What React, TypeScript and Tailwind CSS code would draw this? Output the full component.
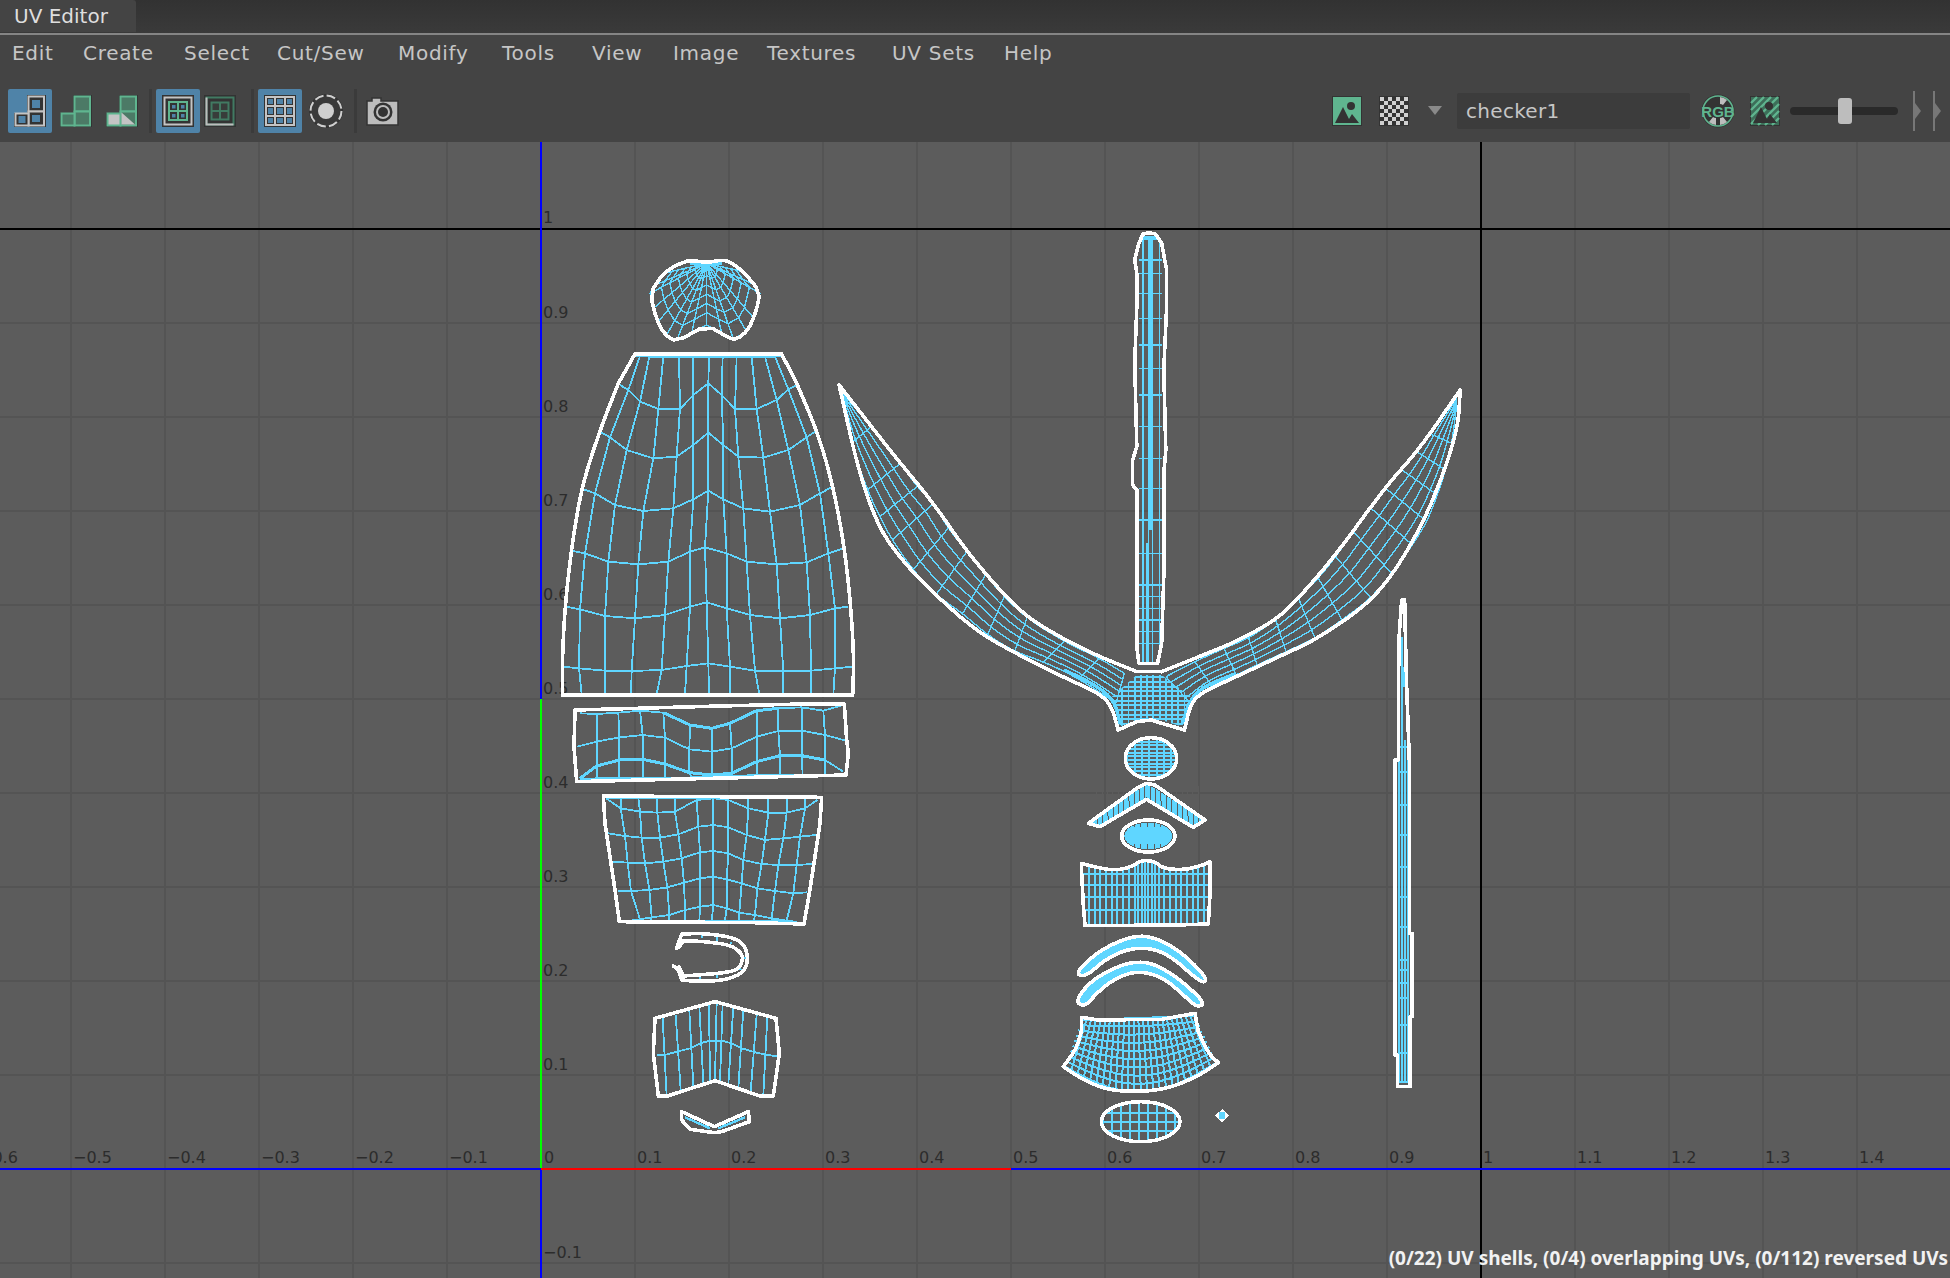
type P = [number, number];

const CYAN = '#5fd6ff';
const pts = (a: P[]) => a.map((p) => p.join(',')).join(' ');
const range = (a: number, b: number, d: number) => {
  const out: number[] = [];
  for (let v = a; v <= b; v += d) out.push(v);
  return out;
};
const lerp = (a: P, b: P, t: number): P => [a[0] + (b[0] - a[0]) * t, a[1] + (b[1] - a[1]) * t];

// corner cutting, two passes, so the hand-picked points read as curves
const smooth = (p: P[], closed = false, passes = 2): P[] => {
  let cur = p;
  for (let k = 0; k < passes; k++) {
    const next: P[] = closed ? [] : [cur[0]];
    const n = cur.length;
    for (let i = 0; i < (closed ? n : n - 1); i++) {
      const a = cur[i];
      const b = cur[(i + 1) % n];
      next.push(lerp(a, b, 0.25), lerp(a, b, 0.75));
    }
    if (!closed) next.push(cur[n - 1]);
    cur = next;
  }
  return cur;
};

// zoomed-in coordinates -> page coordinates
function Z({ ox, oy, sx = 3, sy = 3, children }: { ox: number; oy: number; sx?: number; sy?: number; children: React.ReactNode }) {
  return <g transform={`translate(${ox} ${oy}) scale(${1 / sx} ${1 / sy})`}>{children}</g>;
}

function Line({ p, w = 1.8, c = CYAN }: { p: P[]; w?: number; c?: string }) {
  return <polyline points={pts(p)} fill="none" stroke={c} strokeWidth={w} vectorEffect="non-scaling-stroke" />;
}

function Outline({ p, open }: { p: P[]; open?: boolean }) {
  const Tag = open ? 'polyline' : 'polygon';
  return <Tag points={pts(p)} fill="none" stroke="#ffffff" strokeWidth={3.6} strokeLinejoin="round" strokeLinecap="round" vectorEffect="non-scaling-stroke" />;
}

function Ring({ cx, cy, rx, ry }: { cx: number; cy: number; rx: number; ry: number }) {
  return <ellipse cx={cx} cy={cy} rx={rx} ry={ry} fill="none" stroke="#fff" strokeWidth={3.6} vectorEffect="non-scaling-stroke" />;
}

function Mesh({ rows, w }: { rows: P[][]; w?: number }) {
  const n = rows[0].length;
  return (
    <>
      {rows.map((r, i) => <Line key={i} p={r} w={w} />)}
      {range(1, n - 2, 1).map((c) => <Line key={c} p={rows.map((r) => r[c])} w={w} />)}
    </>
  );
}

function Wing({ up, lo }: { up: P[]; lo: P[] }) {
  const fr = [0, 0.2, 0.4, 0.6, 0.8, 1];
  const cross = up.map((u, i) => fr.map((f) => lerp(u, lo[i], f)));
  return (
    <>
      {cross.map((r, i) => <Line key={i} p={r} w={1.4} />)}
      {fr.map((_, j) => <Line key={j} p={smooth(cross.map((r) => r[j]))} w={1.4} />)}
    </>
  );
}

// dense wire grid cut to the shape of the shell
function GridFill({ id, clip, xs, ys, w = 1.8 }: { id: string; clip: React.ReactNode; xs: number[]; ys: number[]; w?: number }) {
  return (
    <>
      <clipPath id={id}>{clip}</clipPath>
      <g clipPath={`url(#${id})`}>
        {xs.map((x) => <Line key={x} p={[[x, -2000], [x, 3000]]} w={w} />)}
        {ys.map((y) => <Line key={y} p={[[-2000, y], [3000, y]]} w={w} />)}
      </g>
    </>
  );
}

const capEdge: P[] = [[400, 130], [375, 165], [360, 190], [370, 235], [385, 275], [410, 315], [440, 332], [485, 310], [530, 285], [575, 310], [610, 326], [650, 305], [672, 265], [690, 190], [665, 160], [640, 125]];
const capRows: P[][] = [0.2, 0.35, 0.5, 0.65, 0.8, 1].map((f) => capEdge.map((e) => lerp([530, 100], e, f)));

const skirtRows: P[][] = range(0, 9, 1).map((r) => {
  const f = r / 9;
  const l = lerp([125, 900], [75, 1040], f);
  const rt = lerp([465, 888], [530, 1028], f);
  return range(0, 24, 1).map((i) => {
    const t = i / 24;
    const q = lerp(l, rt, t);
    return [q[0], q[1] + Math.sin(Math.PI * t) * 82 * f] as P;
  });
});

const bodyRows: P[][] = [
  [[315, 378], [330, 378], [358, 380], [400, 380], [447, 380], [490, 380], [537, 380], [578, 380], [620, 380], [665, 380], [705, 380], [735, 380], [755, 378]],
  [[270, 465], [295, 480], [330, 515], [385, 537], [450, 537], [490, 495], [535, 460], [575, 495], [615, 537], [680, 537], [740, 510], [775, 478], [800, 465]],
  [[210, 605], [240, 622], [290, 660], [370, 685], [440, 680], [490, 645], [535, 608], [580, 645], [625, 680], [700, 683], [775, 660], [830, 622], [855, 605]],
  [[160, 778], [195, 790], [255, 825], [340, 843], [430, 835], [490, 808], [535, 782], [580, 808], [640, 835], [720, 845], [810, 825], [870, 790], [905, 772]],
  [[125, 962], [165, 970], [235, 995], [325, 1003], [415, 995], [480, 965], [525, 952], [590, 970], [650, 995], [740, 1003], [830, 997], [895, 970], [940, 955]],
  [[110, 1130], [150, 1138], [225, 1158], [315, 1165], [405, 1155], [480, 1130], [530, 1117], [590, 1135], [660, 1155], [750, 1165], [840, 1155], [915, 1135], [955, 1130]],
  [[100, 1310], [147, 1315], [225, 1322], [305, 1323], [395, 1320], [470, 1308], [535, 1300], [600, 1310], [675, 1322], [760, 1323], [843, 1322], [915, 1315], [968, 1310]],
  [[100, 1392], [155, 1392], [225, 1392], [303, 1392], [380, 1392], [465, 1392], [537, 1392], [600, 1392], [688, 1392], [760, 1392], [843, 1392], [910, 1392], [968, 1392]],
];

const bandRows: P[][] = [
  [[150, 70], [200, 72], [265, 68], [330, 62], [400, 68], [480, 105], [545, 115], [600, 100], [680, 62], [745, 55], [815, 52], [880, 62], [940, 45]],
  [[140, 170], [200, 155], [268, 142], [338, 135], [405, 143], [478, 178], [545, 185], [605, 175], [680, 140], [745, 123], [815, 122], [885, 135], [948, 152]],
  [[150, 265], [200, 228], [268, 210], [338, 208], [405, 222], [478, 248], [545, 255], [605, 250], [680, 215], [750, 197], [815, 197], [885, 210], [940, 245]],
  [[150, 268], [200, 265], [268, 265], [340, 265], [405, 265], [485, 262], [545, 260], [610, 258], [680, 255], [750, 255], [818, 255], [885, 255], [940, 255]],
];

const trapRows: P[][] = [
  [[228, 325], [272, 325], [325, 325], [380, 325], [435, 325], [500, 325], [550, 325], [595, 325], [655, 325], [715, 325], [770, 325], [825, 325], [862, 325]],
  [[228, 325], [272, 355], [330, 365], [382, 368], [435, 365], [500, 330], [550, 325], [595, 330], [655, 355], [715, 368], [770, 368], [825, 355], [862, 330]],
  [[235, 430], [285, 438], [335, 443], [390, 443], [445, 433], [505, 410], [550, 405], [595, 412], [650, 435], [705, 450], [760, 445], [810, 440], [858, 435]],
  [[248, 515], [293, 518], [345, 520], [400, 515], [455, 505], [510, 487], [550, 483], [595, 490], [640, 510], [695, 522], [745, 525], [800, 525], [845, 522]],
  [[265, 603], [303, 603], [358, 600], [412, 592], [462, 578], [510, 565], [550, 560], [590, 568], [635, 580], [682, 595], [735, 603], [790, 610], [832, 607]],
  [[300, 692], [330, 688], [365, 682], [418, 675], [465, 660], [510, 650], [550, 645], [590, 655], [628, 668], [675, 675], [725, 685], [770, 692], [800, 696]],
  [[300, 692], [315, 692], [362, 692], [418, 692], [465, 692], [508, 692], [545, 692], [585, 692], [628, 692], [672, 692], [730, 692], [778, 692], [800, 696]],
];

const arcTop: P[] = [[105, 758], [180, 690], [270, 650], [330, 648], [400, 680], [460, 730], [500, 775], [490, 790], [450, 760], [400, 715], [340, 685], [270, 685], [200, 715], [135, 772]];
const arcLow: P[] = [[105, 845], [150, 785], [220, 745], [280, 725], [340, 730], [400, 765], [450, 805], [495, 850], [470, 862], [430, 825], [385, 785], [335, 760], [275, 755], [210, 785], [165, 825], [135, 860]];

function Shells() {
  return (
    <g shapeRendering="crispEdges">
      {/* left column */}
      <Z ox={530} oy={230}>
        {capRows.map((r, i) => <Line key={i} p={r} w={1.4} />)}
        {capEdge.map((_, c) => <Line key={c} w={1.4} p={[[530, 100], ...capRows.map((r) => r[c])]} />)}
        <Line w={3} p={[[480, 100], [575, 100]]} />
        <Outline p={smooth([[480, 90], [530, 98], [575, 90], [600, 95], [640, 125], [690, 185], [680, 240], [655, 300], [620, 328], [600, 325], [530, 285], [440, 335], [405, 315], [380, 270], [360, 190], [400, 130], [440, 105]], true, 1)} />
        <Mesh rows={bodyRows} />
        <Outline open p={[[265, 460], [315, 372], [755, 372], [800, 460]]} />
        <Outline open p={smooth([[800, 460], [860, 600], [905, 750], [940, 930], [960, 1100], [972, 1280], [968, 1395]])} />
        <Outline open p={[[968, 1395], [97, 1395]]} />
        <Outline open p={smooth([[97, 1395], [97, 1280], [105, 1130], [125, 950], [155, 770], [210, 600], [265, 460]])} />
      </Z>
      <Z ox={530} oy={690}>
        <Mesh rows={bandRows} />
        <Line w={3} p={[[400, 68], [480, 105], [545, 115], [600, 100], [680, 62], [745, 55]]} />
        <Line w={3} p={[[150, 265], [200, 228], [268, 210], [338, 208], [405, 222], [478, 248], [545, 255], [605, 250], [680, 215], [750, 197], [815, 197], [885, 210]]} />
        <Outline p={[[135, 60], [320, 55], [570, 48], [820, 42], [943, 42], [950, 150], [955, 190], [948, 255], [670, 262], [420, 268], [140, 275], [132, 170]]} />
        <Mesh rows={trapRows} />
        <Outline p={[[220, 318], [875, 322], [870, 400], [855, 500], [838, 610], [822, 702], [670, 698], [268, 695], [255, 600], [240, 500], [225, 400]]} />
        <Line p={[[515, 735], [515, 745]]} />
        <Line p={[[560, 742], [562, 752]]} />
        <Line p={[[605, 755], [600, 765]]} />
        <Line p={[[640, 805], [655, 805]]} />
        <Line p={[[625, 835], [635, 840]]} />
        <Line p={[[560, 855], [560, 865]]} />
        <Line p={[[510, 858], [510, 870]]} />
        <Outline open p={[[440, 775], ...smooth([[455, 732], [520, 730], [600, 740], [640, 760], [655, 800], [645, 845], [590, 870], [510, 875], [455, 870]]), [445, 840], [430, 828]]} />
        <Outline open p={[[447, 772], ...smooth([[460, 752], [530, 755], [600, 765], [630, 785], [640, 805], [625, 840], [570, 850], [500, 855], [460, 858]]), [447, 830]]} />
        {[[398, 985, 410, 1218], [437, 975, 452, 1200], [478, 960, 490, 1188], [508, 950, 520, 1178], [537, 940, 540, 1172], [560, 940, 555, 1170], [578, 942, 570, 1175], [610, 952, 595, 1185], [640, 960, 625, 1195], [680, 975, 662, 1205], [712, 983, 700, 1215]].map(([a, b, c, d]) => (
          <Line key={a} p={[[a, b], [c, d]]} />
        ))}
        <Line p={[[380, 1095], [405, 1095], [440, 1085], [480, 1075], [510, 1060], [540, 1052], [575, 1052], [605, 1060], [635, 1075], [680, 1088], [715, 1095], [745, 1100]]} />
        <Outline p={[[375, 985], [555, 935], [738, 985], [748, 1090], [730, 1218], [690, 1218], [555, 1172], [412, 1218], [385, 1218], [370, 1090]]} />
        <Line w={2.4} p={[[465, 1282], [540, 1315]]} />
        <Line w={2.4} p={[[565, 1315], [645, 1282]]} />
        <Outline p={[[455, 1265], [553, 1310], [655, 1265], [658, 1295], [575, 1325], [553, 1328], [480, 1318], [455, 1290]]} />
      </Z>

      {/* wings and stalk */}
      <Z ox={830} oy={230} sx={2.412}>
        <Wing
          up={[[30, 490], [100, 590], [170, 700], [210, 770], [250, 820], [285, 895], [330, 965], [375, 1035], [420, 1100], [475, 1165], [565, 1235], [650, 1285], [710, 1330]]}
          lo={[[30, 500], [50, 640], [90, 780], [120, 860], [150, 930], [200, 1020], [255, 1095], [320, 1150], [380, 1215], [445, 1265], [515, 1295], [600, 1345], [690, 1420]]}
        />
        <Wing
          up={[[1510, 500], [1445, 610], [1415, 665], [1380, 720], [1340, 775], [1305, 835], [1262, 905], [1220, 980], [1178, 1045], [1130, 1105], [1075, 1170], [1010, 1225], [950, 1255], [880, 1295], [810, 1340]]}
          lo={[[1510, 540], [1500, 640], [1485, 720], [1465, 795], [1440, 875], [1405, 945], [1355, 1030], [1305, 1105], [1235, 1170], [1170, 1225], [1100, 1265], [1030, 1305], [980, 1335], [920, 1365], [870, 1420]]}
        />
        <GridFill
          id="hub"
          clip={<polygon points="740,1335 800,1335 870,1400 850,1490 800,1470 740,1470 700,1490 680,1400" />}
          xs={range(705, 860, 15)}
          ys={range(1342, 1490, 14)}
        />
        <Line w={3.5} p={smooth([[565, 1320], [640, 1365], [685, 1410], [700, 1480]])} />
        <Line w={3.5} p={smooth([[980, 1330], [900, 1370], [868, 1410], [850, 1480]])} />
        <Outline open p={smooth([[22, 465], [100, 590], [170, 700], [250, 820], [330, 965], [420, 1095], [480, 1165], [560, 1225], [650, 1280], [740, 1325]])} />
        <Outline open p={[[740, 1325], [800, 1325]]} />
        <Outline open p={smooth([[800, 1325], [890, 1280], [980, 1235], [1075, 1170], [1130, 1105], [1220, 975], [1340, 770], [1420, 660], [1520, 480]])} />
        <Outline open p={smooth([[1520, 480], [1515, 590], [1480, 730], [1430, 880], [1360, 1030], [1290, 1130], [1170, 1230], [1100, 1270], [980, 1340], [900, 1385], [870, 1420], [855, 1500]])} />
        <Outline open p={[[855, 1500], [800, 1480], [775, 1470], [740, 1475], [695, 1500]]} />
        <Outline open p={smooth([[695, 1500], [680, 1430], [650, 1390], [560, 1340], [440, 1265], [350, 1200], [250, 1090], [180, 1000], [120, 900], [70, 730], [22, 465]])} />
        {[755, 768, 778, 795].map((x) => <Line key={x} w={1.4} p={[[x, 30], [x, 1295]]} />)}
        <Line w={3} p={[[772, 30], [772, 900]]} />
        <Line w={3} p={[[765, 940], [765, 1295]]} />
        <Line w={4} p={[[755, 25], [790, 25]]} />
        {[90, 130, 190, 265, 345, 415, 495, 590, 685, 775, 870, 970, 1065, 1100, 1135, 1170, 1205, 1240].map((y) => (
          <Line key={y} w={1.4} p={[[745, y], [800, y]]} />
        ))}
        <Outline p={[[770, 8], [785, 12], [800, 40], [812, 120], [812, 230], [805, 420], [810, 660], [805, 730], [805, 1040], [800, 1240], [790, 1300], [745, 1300], [740, 1250], [740, 780], [730, 765], [730, 690], [740, 650], [735, 400], [740, 230], [740, 130], [735, 90], [745, 40], [755, 12]]} />
      </Z>

      {/* small shells under the wings */}
      <Z ox={1040} oy={720}>
        <GridFill id="e1" clip={<ellipse cx={333} cy={115} rx={77} ry={62} />} xs={range(262, 410, 22)} ys={range(65, 170, 11)} w={2} />
        <Ring cx={333} cy={115} rx={77} ry={62} />

        <polygon points="320,195 345,205 490,300 460,318 320,232 180,316 150,310 290,212" fill={CYAN} />
        {range(170, 480, 16).map((x) => (
          <Line key={x} c="#5c5c5c" w={1} p={[[x, 196], [x + 3, 330]]} />
        ))}
        <Outline p={[[320, 190], [345, 195], [495, 300], [460, 322], [320, 238], [180, 320], [145, 310], [290, 205]]} />

        <ellipse cx={325} cy={348} rx={72} ry={40} fill={CYAN} />
        {range(262, 390, 20).map((x) => <Line key={x} c="#5c5c5c" w={1} p={[[x, 300], [x, 322]]} />)}
        {range(262, 390, 20).map((x) => <Line key={x} c="#5c5c5c" w={1} p={[[x, 372], [x, 395]]} />)}
        <Ring cx={325} cy={348} rx={80} ry={48} />

        <GridFill
          id="blk"
          clip={<polygon points="125,430 160,440 225,452 275,440 305,420 345,425 370,445 430,450 490,435 510,425 510,520 505,612 410,615 135,617 130,555 125,460" />}
          xs={[...range(147, 280, 17), ...range(285, 350, 10), ...range(356, 505, 17)]}
          ys={[462, 495, 530, 570]}
          w={2}
        />
        <Outline p={smooth([[125, 430], [160, 440], [225, 452], [275, 440], [305, 420], [345, 425], [370, 445], [430, 450], [490, 435], [510, 425]], false, 1).concat([[510, 520], [505, 612], [410, 615], [135, 617], [130, 555], [125, 460]])} />

        <polygon fill={CYAN} points={pts(smooth(arcTop, true))} />
        <Outline p={smooth(arcTop, true)} />
        <polygon fill={CYAN} points={pts(smooth(arcLow, true))} />
        <Outline p={smooth(arcLow, true)} />

        <Mesh rows={skirtRows} w={2} />
        <Outline p={[[125, 892], [175, 900], [365, 898], [465, 880], ...smooth([[475, 935], [505, 1000], [535, 1028]]), ...smooth([[535, 1028], [480, 1065], [400, 1100], [320, 1115], [210, 1112], [130, 1080], [70, 1040]]), ...smooth([[70, 1040], [110, 985], [125, 930]])]} />

        <GridFill id="e3" clip={<ellipse cx={302} cy={1205} rx={118} ry={60} />} xs={range(190, 420, 27)} ys={[1178, 1205, 1232]} w={2} />
        <Ring cx={302} cy={1205} rx={118} ry={60} />

        <polygon points="547,1167 568,1187 547,1208 525,1187" fill="#fff" />
        <rect x={538} y={1177} width={18} height={20} fill={CYAN} />

        {/* thin strip on the right */}
        <Line w={2.6} p={[[1086, -250], [1086, 1090]]} />
        {[1078, 1094, 1104].map((x) => <Line key={x} p={[[x, 60], [x, 1090]]} />)}
        {[80, 155, 255, 345, 440, 530, 620, 720, 750, 790, 835, 915, 1000, 1085].map((y) => (
          <Line key={y} p={[[1078, y], [1105, y]]} />
        ))}
        <Line w={5} p={[[1090, -160], [1090, -100]]} />
        <Outline p={[[1085, -360], [1078, -260], [1075, -100], [1075, 120], [1065, 120], [1065, 1005], [1072, 1005], [1072, 1100], [1110, 1100], [1110, 890], [1116, 890], [1116, 640], [1108, 640], [1108, 120], [1100, -100], [1096, -260], [1094, -360]]} />
      </Z>
    </g>
  );
}

function Canvas() {
  const X0 = 541;
  const Y0 = 1169;
  const U = 94;
  const vs = range(-6, 14, 1).map((i) => X0 + i * U);
  const hs = range(-1, 10, 1).map((i) => Y0 - i * U);
  const labelU = range(-6, 14, 1).filter((i) => i !== 0 && i !== 10);
  const labelV = range(1, 9, 1);
  const fmt = (i: number) => {
    const s = (Math.abs(i) / 10).toFixed(1);
    return i < 0 ? `−${s}` : s;
  };
  return (
    <svg viewBox="0 142 1950 1136" className="absolute inset-0 w-full h-full">
      {vs.map((x) => <rect key={x} x={x - 1} y={142} width={2} height={1136} fill="#545454" />)}
      {hs.map((y) => <rect key={y} x={0} y={y - 1} width={1950} height={2} fill="#545454" />)}

      <g fill="#2c2c2c" fontFamily="'DejaVu Sans', sans-serif" fontSize={16}>
        {labelU.map((i) => <text key={i} x={X0 + i * U + 2} y={1163}>{fmt(i)}</text>)}
        <text x={X0 + 3} y={1163}>0</text>
        <text x={X0 + 940 + 2} y={1163}>1</text>
        {labelV.map((i) => <text key={i} x={X0 + 2} y={Y0 - i * U - 5}>{fmt(i)}</text>)}
        <text x={X0 + 2} y={223}>1</text>
        <text x={X0 + 2} y={1258}>−0.1</text>
      </g>

      {/* axes */}
      <rect x={0} y={228} width={1950} height={2} fill="#000" />
      <rect x={1480} y={142} width={2} height={1136} fill="#000" />
      <rect x={540} y={142} width={2} height={1136} fill="#0000ff" />
      <rect x={540} y={699} width={2} height={470} fill="#00ff00" />
      <rect x={0} y={1168} width={1950} height={2} fill="#0000ff" />
      <rect x={541} y={1168} width={470} height={2} fill="#ff0000" />

      <Shells />
    </svg>
  );
}

function LShape({ frame, inner, panes, third }: { frame: string; inner: string; panes?: string; third?: boolean }) {
  return (
    <svg width={44} height={44} viewBox="0 0 44 44">
      <path d="M19 6h19v32H6V24h13z" fill="#333" />
      <rect x={20.5} y={7.5} width={15.5} height={15} fill={inner} stroke={frame} strokeWidth={2} />
      <rect x={20.5} y={22.5} width={15.5} height={14} fill={inner} stroke={frame} strokeWidth={2} />
      <rect x={7.5} y={24.5} width={13} height={12} fill={third ? '#c4c4c4' : inner} stroke={frame} strokeWidth={2} />
      {third && <path d="M21.5 23.5 35 35.5H21.5z" fill="#c4c4c4" />}
      {panes && (
        <>
          <rect x={24} y={11} width={8} height={8} fill={panes} />
          <rect x={24} y={26} width={8} height={7} fill={panes} />
          <rect x={10.5} y={27} width={7} height={7} fill={panes} />
        </>
      )}
    </svg>
  );
}

function Sep() {
  return <div className="w-[3px] h-[44px] bg-[#3b3b3b]" />;
}

function ToolLeft() {
  return (
    <div className="flex items-center pl-[8px]">
      <div className="w-[44px] h-[44px] rounded-[2px] bg-[#4f83a8]">
        <LShape frame="#c4c4c4" inner="#333" panes="#4f83a8" />
      </div>
      <div className="ml-[2px]"><LShape frame="#5fb58f" inner="#4c7a66" /></div>
      <div className="ml-[2px]"><LShape frame="#5fb58f" inner="#4c7a66" third /></div>
      <div className="ml-[5px]"><Sep /></div>
      <div className="ml-[4px] w-[44px] h-[44px] rounded-[2px] bg-[#4f83a8]">
        <svg width={44} height={44} viewBox="0 0 44 44">
          <rect x={6} y={6} width={32} height={32} fill="#333" />
          <rect x={8.5} y={8.5} width={27} height={27} fill="#333" stroke="#c4c4c4" strokeWidth={2} />
          <rect x={13} y={13} width={18} height={18} fill="#333" stroke="#5fb58f" strokeWidth={2} />
          <path d="M22 13v18M13 22h18" stroke="#5fb58f" strokeWidth={2} />
          {[16, 25].map((x) => [16, 25].map((y) => (
            <rect key={`${x}-${y}`} x={x} y={y} width={3.5} height={3.5} fill="#4f83a8" />
          )))}
        </svg>
      </div>
      <div className="ml-[2px]">
        <svg width={38} height={44} viewBox="0 0 38 44">
          <rect x={2} y={6} width={32} height={32} fill="#333" />
          <rect x={4.5} y={8.5} width={27} height={27} fill="#333" stroke="#417a62" strokeWidth={2} />
          <path d="M4.5 8.5v27h27" fill="none" stroke="#bdbdbd" strokeWidth={2} />
          <rect x={9.5} y={13.5} width={17} height={17} fill="#383c3a" stroke="#417a62" strokeWidth={2} />
          <path d="M18 13v18M9 22h18" stroke="#417a62" strokeWidth={2} />
        </svg>
      </div>
      <div className="ml-[11px]"><Sep /></div>
      <div className="ml-[4px] w-[44px] h-[44px] rounded-[2px] bg-[#4f83a8]">
        <svg width={44} height={44} viewBox="0 0 44 44">
          <rect x={6} y={6} width={32} height={32} fill="#333" />
          <path d="M8 8h28v28H8zM17 8v28M27 8v28M8 17h28M8 27h28" fill="none" stroke="#c4c4c4" strokeWidth={2} />
          {[10, 19, 29].map((x) => [10, 19, 29].map((y) => (
            <rect key={`${x}-${y}`} x={x} y={y} width={x === 19 ? 6 : 5} height={y === 19 ? 6 : 5} fill="#4f83a8" />
          )))}
        </svg>
      </div>
      <div className="ml-[6px]">
        <svg width={36} height={44} viewBox="0 0 36 44">
          <circle cx={18} cy={22} r={17} fill="#333" />
          <circle cx={18} cy={22} r={15.5} fill="#3a3a3a" stroke="#cfcfcf" strokeWidth={2} strokeDasharray="9 3.2" />
          <circle cx={18} cy={22} r={8} fill="#cfcfcf" />
        </svg>
      </div>
      <div className="ml-[10px]"><Sep /></div>
      <div className="ml-[8px]">
        <svg width={36} height={32} viewBox="0 0 36 32">
          <path d="M3 6h4V3h9v3h17v24H2V6z" fill="#bcbcbc" stroke="#333" strokeWidth={1.5} />
          <circle cx={18} cy={17} r={9.5} fill="#333" />
          <circle cx={18} cy={17} r={7} fill="#bcbcbc" />
          <circle cx={18} cy={17} r={5} fill="#333" />
        </svg>
      </div>
    </div>
  );
}

function ImageIcon({ striped }: { striped?: boolean }) {
  return (
    <svg width={30} height={30} viewBox="0 0 30 30">
      <rect x={0.5} y={0.5} width={29} height={29} fill={striped ? '#3d6e59' : '#5fb58f'} stroke="#333" />
      {striped && <path d="M1 7 7 1M1 14 14 1M1 21 21 1M1 28 28 1M8 29 29 8M15 29 29 15M22 29 29 22" stroke="#5fb58f" strokeWidth={2.4} />}
      <circle cx={19} cy={10} r={4} fill="#333" />
      <path d="M3 27 11 11l6 12 3-5 7 9z" fill="#333" />
    </svg>
  );
}

function Checker() {
  return (
    <svg width={30} height={30} viewBox="0 0 30 30">
      <rect width={30} height={30} fill="#333" />
      {range(0, 6, 1).map((r) => range(0, 6, 1).map((c) => ((r + c) % 2 === 0 ? <rect key={`${r}-${c}`} x={1 + c * 4} y={1 + r * 4} width={4} height={4} fill="#cfcfcf" /> : null)))}
    </svg>
  );
}

function ToolRight() {
  return (
    <div className="ml-auto flex items-center text-[#c6c6c6]">
      <ImageIcon />
      <div className="ml-[17px]"><Checker /></div>
      <div className="ml-[19px] w-0 h-0 border-x-[7px] border-x-transparent border-t-[9px] border-t-[#8a8a8a]" />
      <div className="ml-[15px] w-[233px] h-[36px] bg-[#3c3c3c] rounded-[2px] pl-[9px] flex items-center text-[20px] tracking-[0.3px]">
        checker1
      </div>
      <div className="ml-[11px]">
        <svg width={34} height={34} viewBox="0 0 34 34">
          <circle cx={17} cy={17} r={16.5} fill="#333" />
          <circle cx={17} cy={17} r={15} fill="none" stroke="#5fb58f" strokeWidth={1.5} />
          <path d="M19 3a14 14 0 0 1 7 3l-4 5a7 7 0 0 0-3-1zM15 31a14 14 0 0 1-7-3l4-5a7 7 0 0 0 3 1zM19 31a14 14 0 0 0 7-3l-4-5a7 7 0 0 1-3 1z" fill="#bdbdbd" />
          <text x={17} y={22.5} textAnchor="middle" fontSize={15} fontWeight={700} fill="#5fb58f" fontFamily="'Liberation Sans', sans-serif">RGB</text>
        </svg>
      </div>
      <div className="ml-[15px]"><ImageIcon striped /></div>
      <div className="ml-[10px] relative w-[108px] h-[8px] rounded-full bg-[#2a2a2a]">
        <div className="absolute left-[48px] top-[-9px] w-[14px] h-[26px] rounded-[3px] bg-[#bdbdbd]" />
      </div>
      <div className="ml-[15px] flex items-center h-[40px] border-l-2 border-[#777]">
        <div className="w-0 h-0 border-y-[8px] border-y-transparent border-l-[6px] border-l-[#777]" />
      </div>
      <div className="ml-[12px] mr-[9px] flex items-center h-[40px] border-l-2 border-[#777]">
        <div className="w-0 h-0 border-y-[8px] border-y-transparent border-l-[6px] border-l-[#777]" />
      </div>
    </div>
  );
}

const MENU = [
  { label: 'Edit', cls: 'w-[71px]' },
  { label: 'Create', cls: 'w-[101px]' },
  { label: 'Select', cls: 'w-[93px]' },
  { label: 'Cut/Sew', cls: 'w-[121px]' },
  { label: 'Modify', cls: 'w-[104px]' },
  { label: 'Tools', cls: 'w-[90px]' },
  { label: 'View', cls: 'w-[81px]' },
  { label: 'Image', cls: 'w-[94px]' },
  { label: 'Textures', cls: 'w-[125px]' },
  { label: 'UV Sets', cls: 'w-[112px]' },
  { label: 'Help', cls: 'w-[50px]' },
];

export default function App() {
  return (
    <div className="relative w-[1950px] h-[1278px] overflow-hidden flex flex-col bg-[#5c5c5c] font-['DejaVu_Sans',sans-serif]">
      <div className="h-[33px] flex bg-gradient-to-b from-[#323232] to-[#3a3a3a]">
        <div className="w-[136px] h-[32px] pl-[14px] flex items-center bg-[#444444] rounded-tr-[3px] text-[20px] text-[#dedede]">
          UV Editor
        </div>
      </div>
      <div className="h-[2px] bg-[#858585]" />
      <div className="h-[107px] bg-[#444444] flex flex-col">
        <div className="h-[36px] pl-[12px] flex items-center text-[20px] tracking-[0.7px] text-[#c6c6c6] whitespace-nowrap">
          {MENU.map((m) => <span key={m.label} className={m.cls}>{m.label}</span>)}
        </div>
        <div className="flex-1 flex items-center pt-[8px]">
          <ToolLeft />
          <ToolRight />
        </div>
      </div>
      <div className="relative flex-1">
        <Canvas />
        <div className="absolute right-[2px] bottom-[8px] text-[19px] font-bold leading-[24px] text-[#f2f2f2] font-['Noto_Sans',sans-serif] whitespace-nowrap">
          (0/22) UV shells, (0/4) overlapping UVs, (0/112) reversed UVs
        </div>
      </div>
    </div>
  );
}
